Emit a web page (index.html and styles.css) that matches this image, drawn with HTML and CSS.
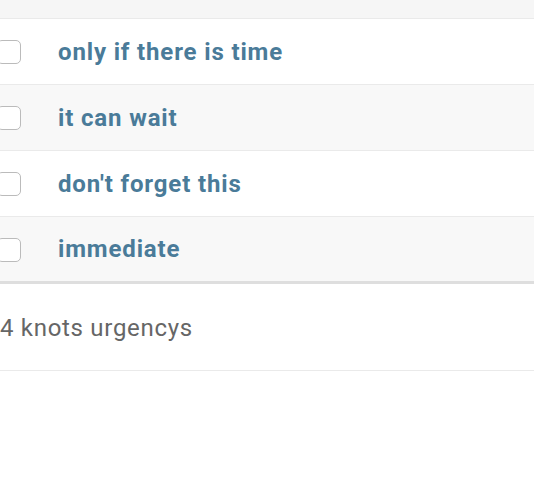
FILE: index.html
```html
<!DOCTYPE html>
<html>
<head>
<meta charset="utf-8">
<link rel="stylesheet" href="styles.css">
</head>
<body>
<div class="changelist">
  <div class="head"></div>
  <div class="row">
    <span class="check"></span>
    <a class="link">only if there is time</a>
  </div>
  <div class="row alt">
    <span class="check"></span>
    <a class="link">it can wait</a>
  </div>
  <div class="row">
    <span class="check"></span>
    <a class="link">don't forget this</a>
  </div>
  <div class="row alt last">
    <span class="check"></span>
    <a class="link">immediate</a>
  </div>
  <div class="paginator">4 knots urgencys</div>
</div>
</body>
</html>
```
FILE: styles.css
```css
html, body {
  margin: 0;
  padding: 0;
  background: #fff;
  font-family: Roboto, "Liberation Sans", sans-serif;
}
.changelist {
  width: 534px;
}
.head {
  height: 18px;
  background: #f6f6f6;
  border-bottom: 1px solid #eaeaea;
}
.row {
  height: 65px;
  display: flex;
  align-items: center;
  border-bottom: 1px solid #eaeaea;
  background: #fff;
}
.row.alt {
  background: #f8f8f8;
}
.row.last {
  height: 64px;
  border-bottom: 3px solid #dedede;
}
.check {
  box-sizing: border-box;
  width: 24px;
  height: 24px;
  margin-left: -3px;
  margin-top: 1px;
  border: 1px solid #bbb;
  border-radius: 5px;
  background: #fff;
  flex: none;
}
.link {
  margin-left: 37px;
  color: #4a7b99;
  font-weight: 700;
  font-size: 24px;
  letter-spacing: 0.85px;
  text-decoration: none;
}
.paginator {
  height: 87px;
  display: flex;
  align-items: center;
  padding-top: 2px;
  box-sizing: border-box;
  border-bottom: 1px solid #eaeaea;
  color: #666;
  font-size: 24px;
  letter-spacing: 0.7px;
}
```
